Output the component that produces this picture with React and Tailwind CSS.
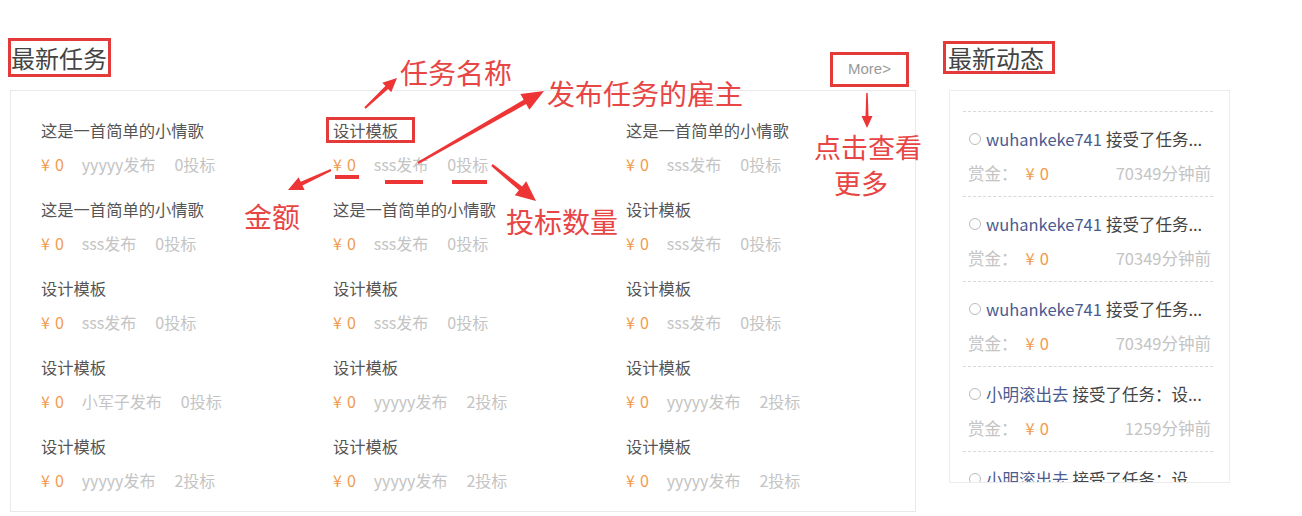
import React from 'react';

const tasks = [
  [['这是一首简单的小情歌', 'yyyyy', 0], ['设计模板', 'sss', 0], ['这是一首简单的小情歌', 'sss', 0]],
  [['这是一首简单的小情歌', 'sss', 0], ['这是一首简单的小情歌', 'sss', 0], ['设计模板', 'sss', 0]],
  [['设计模板', 'sss', 0], ['设计模板', 'sss', 0], ['设计模板', 'sss', 0]],
  [['设计模板', '小军子', 0], ['设计模板', 'yyyyy', 2], ['设计模板', 'yyyyy', 2]],
  [['设计模板', 'yyyyy', 2], ['设计模板', 'yyyyy', 2], ['设计模板', 'yyyyy', 2]],
];

const feed = [
  { name: 'wuhankeke741', act: '接受了任务...', time: '70349分钟前' },
  { name: 'wuhankeke741', act: '接受了任务...', time: '70349分钟前' },
  { name: 'wuhankeke741', act: '接受了任务...', time: '70349分钟前' },
  { name: '小明滚出去', act: '接受了任务：设...', time: '1259分钟前' },
  { name: '小明滚出去', act: '接受了任务：设...', time: '1259分钟前' },
];

// filled arrow polygon from tail to tip
const Arrow = ({ from, to, w = 4, head = 16, hw = 14 }) => {
  const [x1, y1] = from;
  const [x2, y2] = to;
  const dx = x2 - x1, dy = y2 - y1;
  const len = Math.hypot(dx, dy);
  const ux = dx / len, uy = dy / len;
  const nx = -uy, ny = ux;
  const bx = x2 - ux * head, by = y2 - uy * head;
  const pts = [
    [x1 + nx * w * 0.25, y1 + ny * w * 0.25],
    [bx + nx * w / 2, by + ny * w / 2],
    [bx + nx * hw / 2, by + ny * hw / 2],
    [x2, y2],
    [bx - nx * hw / 2, by - ny * hw / 2],
    [bx - nx * w / 2, by - ny * w / 2],
    [x1 - nx * w * 0.25, y1 - ny * w * 0.25],
  ];
  return <polygon points={pts.map(p => p.join(',')).join(' ')} fill="#ee3535" />;
};

const TaskCell = ({ title, user, bids }) => (
  <div className="h-[79px]">
    <div className="h-[20px] leading-[20px] text-[16.3px] text-[#555] whitespace-nowrap">{title}</div>
    <div className="mt-[14px] h-[20px] leading-[20px] text-[16px] text-[#c4c4c4] flex whitespace-nowrap">
      <span className="text-[#f29a4e] tracking-[5px]">¥0</span>
      <span className="ml-[13px]">{user}发布</span>
      <span className="ml-[19px]">{bids}投标</span>
    </div>
  </div>
);

export default function App() {
  return (
    <div className="relative w-[1302px] h-[516px] bg-white overflow-hidden" style={{ fontFamily: '"Noto Sans CJK SC", "Noto Sans", sans-serif' }}>
      <div className="flex">
        {/* latest tasks */}
        <div className="ml-[10px] w-[906px]">
          <div className="h-[90px] flex justify-between items-start">
            <div className="mt-[38px] -ml-[2px] w-[103px] h-[39px] border-[3px] border-[#e53a3a] text-[24px] leading-[33px] text-[#444] whitespace-nowrap">最新任务</div>
            <div className="mt-[52px] mr-[7px] w-[79px] h-[35px] border-[3px] border-[#e53a3a] flex items-center justify-center text-[15px] text-[#999]" style={{ fontFamily: '"Liberation Sans", sans-serif' }}>More&gt;</div>
          </div>
          <div className="h-[422px] border border-[#e9e9e9] pl-[30px] pt-[29px] grid grid-cols-[292px_293px_292px]">
            {tasks.flat().map((t, i) => (
              <TaskCell key={i} title={t[0]} user={t[1]} bids={t[2]} />
            ))}
          </div>
        </div>

        {/* latest activity */}
        <div className="ml-[27px] w-[287px]">
          <div className="mt-[41px] h-[33px] w-[112px] border-[3px] border-[#e53a3a] pl-[2px] text-[24px] leading-[27px] text-[#444] whitespace-nowrap">最新动态</div>
          <div className="mt-[16px] ml-[6px] w-[281px] h-[393px] border border-[#ececec] pl-[13px] pr-[16px] pt-[20px] overflow-hidden">
            {feed.map((f, i) => (
              <div key={i} className="border-t border-dashed border-[#d8d8d8] pt-[17px] pb-[13px]">
                <div className="h-[20px] leading-[20px] flex items-center pl-[6px] text-[16.5px] whitespace-nowrap">
                  <span className="shrink-0 w-[12px] h-[12px] rounded-full border border-[#bbb] mr-[5px]" />
                  <span className="text-[#4b5b8f]">{f.name}</span>
                  <span className="ml-[4px] text-[#444]">{f.act}</span>
                </div>
                <div className="mt-[14px] h-[20px] leading-[20px] flex justify-between pl-[5px] pr-[2px] text-[16.5px] text-[#c4c4c4] whitespace-nowrap">
                  <span>赏金：<span className="ml-[8px] text-[#f29a4e] tracking-[5px]">¥0</span></span>
                  <span>{f.time}</span>
                </div>
              </div>
            ))}
          </div>
        </div>
      </div>

      {/* annotations */}
      <div className="absolute left-[326px] top-[117px] w-[89px] h-[26px] border-[3px] border-[#e53a3a]" />
      <div className="absolute left-[335px] top-[175px] w-[24px] h-[4px] bg-[#ee3535]" />
      <div className="absolute left-[385px] top-[180px] w-[38px] h-[4px] bg-[#ee3535]" />
      <div className="absolute left-[452px] top-[180px] w-[35px] h-[4px] bg-[#ee3535]" />

      <div className="absolute left-[400px] top-[56px] text-[28px] leading-[32px] text-[#e84545] whitespace-nowrap">任务名称</div>
      <div className="absolute left-[547px] top-[77px] text-[28px] leading-[32px] text-[#e84545] whitespace-nowrap">发布任务的雇主</div>
      <div className="absolute left-[244px] top-[200px] text-[28px] leading-[32px] text-[#e84545] whitespace-nowrap">金额</div>
      <div className="absolute left-[506px] top-[205px] text-[28px] leading-[32px] text-[#e84545] whitespace-nowrap">投标数量</div>
      <div className="absolute left-[814px] top-[131px] text-[27px] leading-[32px] text-[#e84545] whitespace-nowrap">点击查看</div>
      <div className="absolute left-[834px] top-[167px] text-[27px] leading-[32px] text-[#e84545] whitespace-nowrap">更多</div>

      <svg className="absolute left-0 top-0 pointer-events-none" width="1302" height="516">
        <Arrow from={[365, 108]} to={[397, 78]} w={4} head={14} hw={13} />
        <Arrow from={[418, 163]} to={[544, 91]} w={5} head={22} hw={18} />
        <Arrow from={[331, 170]} to={[288, 190]} w={4} head={15} hw={14} />
        <Arrow from={[492, 165]} to={[536, 201]} w={5} head={20} hw={18} />
        <Arrow from={[867, 93]} to={[867, 128]} w={3} head={12} hw={11} />
      </svg>
    </div>
  );
}
